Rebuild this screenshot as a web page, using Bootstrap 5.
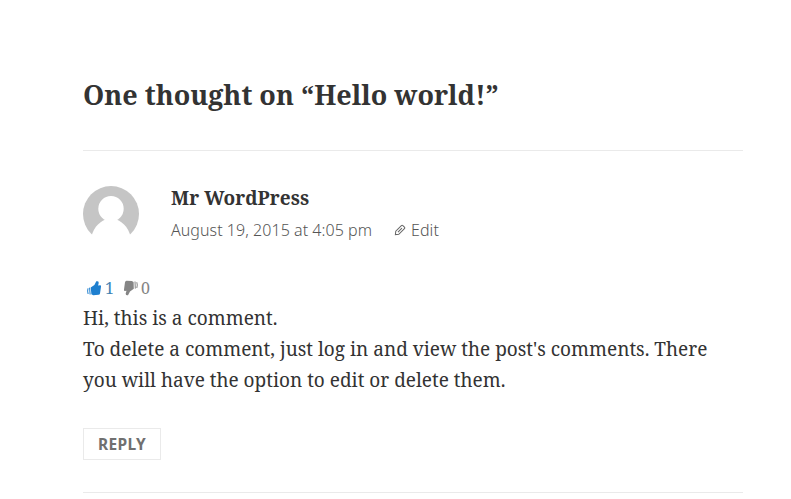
<!DOCTYPE html>
<html lang="en">
<head>
<meta charset="utf-8">
<meta name="viewport" content="width=device-width, initial-scale=1">
<title>Hello world!</title>
<link rel="stylesheet" href="https://cdn.jsdelivr.net/npm/bootstrap@5.3.0/dist/css/bootstrap.min.css">
<style>
body{font-family:"Noto Serif",serif;color:#333;font-size:19px;line-height:31px;background:#fff;overflow:hidden}
.comments-area{padding:78px 48px 0 83px}
.comments-title{font-size:27px;line-height:34px;font-weight:700}
.comment-item{border-top:1px solid #eaeaea;border-bottom:1px solid #eaeaea;margin-top:38px;padding:35px 0 32px}
.comment-head{gap:32px;height:58px}
.comment-author{font-size:19px;line-height:25px;font-weight:700;letter-spacing:.08px}
.comment-meta{font-family:"Noto Sans",sans-serif;font-weight:300;font-size:16px;line-height:24px;color:#555;margin-top:7px;letter-spacing:.05px}
.edit-link{margin-left:22px;gap:5px}
.votes{font-size:16px;line-height:28px;margin-top:30px;padding-left:4px;color:#858585}
.vote-up{color:#1e7fcf;gap:4px}
.vote-up span{color:#3f83b4}
.vote-down{margin-left:10px;gap:3px}
.comment-text{padding-top:1px}
.btn-reply{font-family:"Noto Sans",sans-serif;font-weight:700;font-size:15.5px;line-height:24px;color:#707070;border:1px solid #eaeaea;border-radius:0;padding:3px 14px;letter-spacing:.35px;margin-top:32px}
</style>
</head>
<body>
<main class="comments-area">
  <h2 class="comments-title mb-0">One thought on “Hello world!”</h2>
  <article class="comment-item">
    <header class="comment-head d-flex align-items-start">
      <svg class="flex-shrink-0" width="56" height="56" viewBox="0 0 56 56" aria-hidden="true">
        <circle cx="28" cy="28" r="28" fill="#c5c5c5"/>
        <circle cx="28" cy="22.8" r="12.7" fill="#fff"/>
        <path d="M7 57C9 43 15 36.500 22.500 33.500h11C41 36.500 47 43 49 57z" fill="#fff"/>
      </svg>
      <div>
        <div class="comment-author">Mr WordPress</div>
        <div class="comment-meta d-flex align-items-center">
          <time>August 19, 2015 at 4:05 pm</time>
          <span class="edit-link d-flex align-items-center">
            <svg width="12" height="12" viewBox="0 0 13 13" fill="none" stroke="#666" stroke-width="1.1" aria-hidden="true"><path d="M1.500 11.500 1.900 7.800 8 1.700q.8-.8 1.600 0l1.700 1.700q.8.8 0 1.600L5.200 11.100zM4.300 8.700 8.600 4.400"/></svg>
            <span>Edit</span>
          </span>
        </div>
      </div>
    </header>
    <div class="votes d-flex align-items-center">
      <span class="vote-up d-flex align-items-center">
        <svg width="14" height="16" viewBox="0 0 14 16" fill="currentColor" aria-hidden="true"><path d="M4.400 14.300 3.700 7.600 7.400 5 9.300 1.300Q11.900.8 11.700 3L11.100 5.500l2.200-.3q.9.300.7 1.500l-1 6.800q-.3 1.200-1.400 1.300l-5.400.4z"/><path d="M2.600 7.700 3.100 14.500M1 8.300Q.2 11 1.100 14" fill="none" stroke="currentColor" stroke-width="1"/></svg>
        <span>1</span>
      </span>
      <span class="vote-down d-flex align-items-center">
        <svg width="14" height="16" viewBox="0 0 14 16" fill="currentColor" aria-hidden="true"><path d="M9.600 2 9.800 8.800 6 11.500 4 15.200Q1.500 15.600 1.700 13.400L2.500 10.700.7 10.900Q-.2 10.600 0 9.400L1 2.300Q1.300.9 2.500.8L7.800.9z"/><path d="M11 1.500 11.300 8.600M12.800 2.200Q13.800 5 12.800 8" fill="none" stroke="currentColor" stroke-width="1"/></svg>
        <span>0</span>
      </span>
    </div>
    <p class="comment-text mb-0">Hi, this is a comment.<br>To delete a comment, just log in and view the post's comments. There you will have the option to edit or delete them.</p>
    <button type="button" class="btn btn-reply d-block">REPLY</button>
  </article>
</main>
<script src="https://cdn.jsdelivr.net/npm/bootstrap@5.3.0/dist/js/bootstrap.bundle.min.js"></script>
</body>
</html>
